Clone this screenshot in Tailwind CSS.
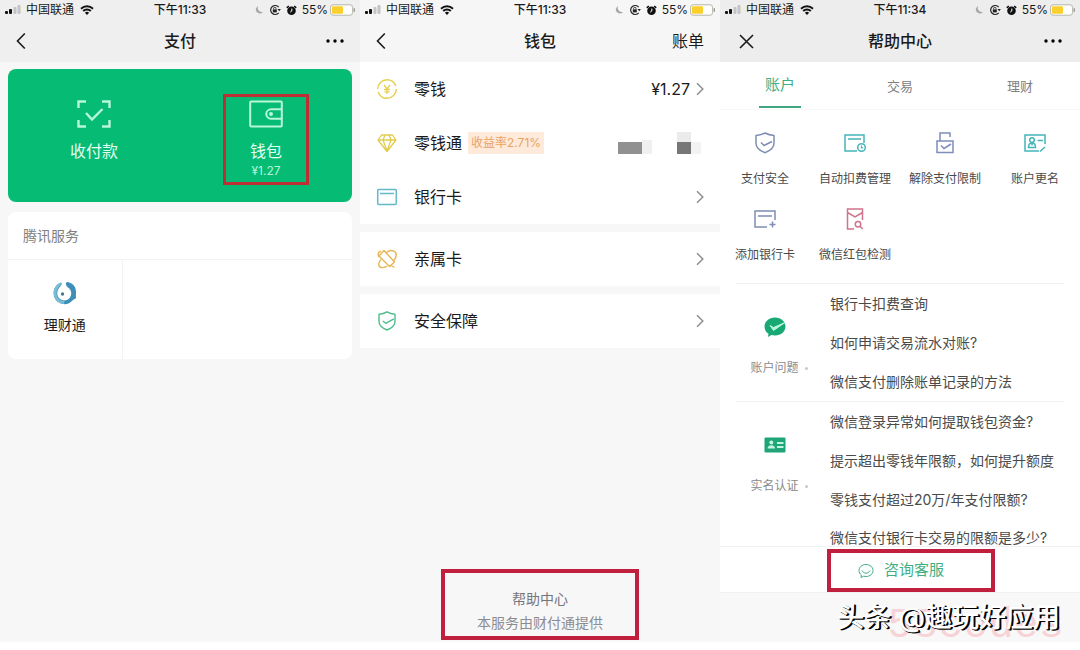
<!DOCTYPE html>
<html lang="zh-CN">
<head>
<meta charset="utf-8">
<meta name="viewport" content="width=device-width, initial-scale=1">
<title>支付 · 钱包 · 帮助中心</title>
<script src="https://cdn.jsdelivr.net/npm/@tailwindcss/browser@4"></script>
</head>
<body class="bg-white font-['Inter','Noto_Sans_CJK_SC',sans-serif] text-[#1a1a1a]">
<svg class="hidden" aria-hidden="true">
  <symbol id="signal" viewBox="0 0 17 10"><rect x="0" y="6" width="3" height="3" rx="1" fill="#111"/><rect x="4" y="4" width="3" height="5" rx="1" fill="#111"/><rect x="8.500" y="2" width="3" height="7" rx="1" fill="#c4c4c4"/><rect x="12.500" y="0" width="3" height="9" rx="1" fill="#c4c4c4"/></symbol>
  <symbol id="wifi" viewBox="0 0 14 10"><path d="M1 3.700a8.600 8.600 0 0 1 12 0M3.200 6a5.400 5.400 0 0 1 7.600 0" fill="none" stroke="#111" stroke-width="1.900"/><path d="M7 10 4.900 7.800a3 3 0 0 1 4.200 0z" fill="#111"/></symbol>
  <symbol id="moon" viewBox="0 0 10 10"><path d="M4 1a4 4 0 1 0 5 6A4.500 4.500 0 0 1 4 1z" fill="#a8a8a8"/></symbol>
  <symbol id="lock" viewBox="0 0 12 12"><path d="M9.700 3.200A4.500 4.500 0 1 0 9.700 8.800" fill="none" stroke="#222" stroke-width="1.200"/><path d="M8.500 5h3.400l-1.700 2.300z" fill="#222"/><rect x="3.800" y="5.400" width="4" height="3" fill="#222"/><path d="M4.600 5.500V4.500a1.200 1.200 0 0 1 2.400 0v1" fill="none" stroke="#222" stroke-width=".9"/></symbol>
  <symbol id="alarm" viewBox="0 0 11 11"><circle cx="5.500" cy="5.700" r="4.300" fill="#111"/><path d="M.8 2.800 2.800 1M10.200 2.800 8.200 1" stroke="#111" stroke-width="1.600"/><path d="M5.800 3.600v2.400L4.200 7.200" fill="none" stroke="#fff" stroke-width="1"/></symbol>
  <symbol id="battery" viewBox="0 0 26 12"><rect x=".6" y=".8" width="22" height="10.400" rx="2.500" fill="#fff" stroke="#b5b5a8"/><rect x="2" y="2.200" width="11" height="7.600" rx="1" fill="#fbd02e"/><path d="M24.300 4.200v3.600" stroke="#999" stroke-width="1.400"/></symbol>
  <symbol id="back" viewBox="0 0 10 18"><path d="M8.800 1.500 1.500 9l7.300 7.500" fill="none" stroke="#1a1a1a" stroke-width="1.600"/></symbol>
  <symbol id="more" viewBox="0 0 18 4"><circle cx="2" cy="2" r="1.700"/><circle cx="9" cy="2" r="1.700"/><circle cx="16" cy="2" r="1.700"/></symbol>
  <symbol id="chevron" viewBox="0 0 8 14"><path d="M1 1.200 6.800 7 1 12.800" fill="none" stroke="#8e8e8e" stroke-width="1.500"/></symbol>
</svg>

<main class="grid min-h-screen grid-cols-3 pb-2">

  <!-- 支付 -->
  <section class="flex flex-col bg-[#f7f7f7]">
    <header class="bg-[#efefef]">
      <div class="grid h-5 grid-cols-[1fr_auto_1fr] items-center text-xs">
        <div class="flex items-center gap-1 pl-[5px]"><svg class="h-[10px] w-[17px]"><use href="#signal"/></svg><span>中国联通</span><svg class="ml-[2px] h-[10px] w-[14px]"><use href="#wifi"/></svg></div>
        <span class="font-medium">下午11:33</span>
        <div class="flex items-center justify-end gap-[5px] pr-[4px]"><svg class="size-[10px]"><use href="#moon"/></svg><svg class="size-3"><use href="#lock"/></svg><svg class="size-[11px]"><use href="#alarm"/></svg><span>55%</span><svg class="-ml-[3px] h-3 w-[26px]"><use href="#battery"/></svg></div>
      </div>
      <div class="grid h-[42px] grid-cols-3 items-center px-4">
        <button aria-label="返回"><svg class="h-[18px] w-[10px]"><use href="#back"/></svg></button>
        <h1 class="text-center text-base font-medium">支付</h1>
        <button class="justify-self-end" aria-label="更多"><svg class="h-1 w-[18px]"><use href="#more"/></svg></button>
      </div>
    </header>
    <div class="mx-2 mt-[7px] grid grid-cols-2 rounded-lg bg-[#06bb74] pt-[25px] pb-[17px] text-[#e2fff1]">
      <button class="mx-auto flex w-[86px] flex-col items-center pt-[6px]">
        <svg class="h-7 w-[34px]" viewBox="0 0 34 28" fill="none" stroke="#b9f7da" stroke-width="2.400"><path d="M1.500 8V1.500H9M25 1.500h7.500V8M1.500 20v6.500H9M25 26.500h7.500V20M9 13l6 6.500L25.500 9"/></svg>
        <span class="mt-[11px] text-base leading-6">收付款</span>
      </button>
      <button class="mx-auto flex h-[91px] w-[86px] flex-col items-center border-[3px] border-[#bd2f34] pt-[3px]">
        <svg class="h-7 w-[34px]" viewBox="0 0 34 28" fill="none" stroke="#b9f7da" stroke-width="2"><rect x="1.200" y="1.500" width="31.600" height="25" rx="1"/><path d="M32.500 9.300H22a4.700 4.700 0 0 0 0 9.400h10.500"/><circle cx="22" cy="14" r="1" fill="#b9f7da"/></svg>
        <span class="mt-[11px] text-base leading-6">钱包</span>
        <span class="text-xs leading-4 text-[#b4f5d7]">¥1.27</span>
      </button>
    </div>
    <div class="mx-2 mt-[10px] rounded-lg bg-white">
      <h2 class="border-b border-[#f3f3f3] px-[15px] text-sm leading-[47px] text-[#808080]">腾讯服务</h2>
      <div class="grid grid-cols-3">
        <button class="flex h-[99px] flex-col items-center border-r border-[#f3f3f3] pt-[21px]">
          <svg class="size-6" viewBox="0 0 24 24"><path d="M14 1c5 .5 8.500 4 9 9 .2 2-.3 3.500 0 6 .2 2-1.500 2-3 3-5 6-13 5-17 0C-1 14 0 5 7 2c2-.8 2 1 1 2.400-4 4-5 9-2 12.600 3 3.500 8.500 3 11-.5 2.500-4 1-8-2-10C13 5 12 2 14 1z" fill="#3d8fb8"/><path d="M7 2C0 5-1 14 3 19c2 2.500 5 4 8 4l.5-3C5 20 1 13 5.500 6.500 6.500 5 8 4 9 2.500 9 1.500 8 1.600 7 2z" fill="#79bcd6"/><circle cx="9.500" cy="13" r="1.700" fill="#47798c"/></svg>
          <span class="mt-2 text-sm leading-6">理财通</span>
        </button>
      </div>
    </div>
  </section>

  <!-- 钱包 -->
  <section class="flex flex-col bg-[#f7f7f8]">
    <header class="bg-[#f6f6f6]">
      <div class="grid h-5 grid-cols-[1fr_auto_1fr] items-center text-xs">
        <div class="flex items-center gap-1 pl-[5px]"><svg class="h-[10px] w-[17px]"><use href="#signal"/></svg><span>中国联通</span><svg class="ml-[2px] h-[10px] w-[14px]"><use href="#wifi"/></svg></div>
        <span class="font-medium">下午11:33</span>
        <div class="flex items-center justify-end gap-[5px] pr-[4px]"><svg class="size-[10px]"><use href="#moon"/></svg><svg class="size-3"><use href="#lock"/></svg><svg class="size-[11px]"><use href="#alarm"/></svg><span>55%</span><svg class="-ml-[3px] h-3 w-[26px]"><use href="#battery"/></svg></div>
      </div>
      <div class="grid h-[42px] grid-cols-3 items-center px-4">
        <button aria-label="返回"><svg class="h-[18px] w-[10px]"><use href="#back"/></svg></button>
        <h1 class="text-center text-base font-medium">钱包</h1>
        <button class="justify-self-end text-base">账单</button>
      </div>
    </header>
    <div class="flex flex-col gap-2">
      <div class="bg-white">
        <button class="flex h-[54px] w-full items-center px-4">
          <svg class="size-[22px]" viewBox="0 0 22 22" fill="none" stroke="#e6cf50" stroke-width="1.400"><circle cx="11" cy="11" r="9.300" stroke-dasharray="26 3"/><path d="m8 7 3 4 3-4M11 11v5M8 11.500h6M8.500 13.800h5" stroke-width="1.300"/></svg>
          <span class="ml-4">零钱</span><span class="ml-auto">¥1.27</span><svg class="ml-[6px] h-[14px] w-2"><use href="#chevron"/></svg>
        </button>
        <button class="flex h-[54px] w-full items-center px-4">
          <svg class="size-[22px]" viewBox="0 0 22 22" fill="none" stroke="#e2cc4c" stroke-width="1.300" stroke-linejoin="round"><path d="M5.500 3h11L20 8l-9 11.500L2 8zM2 8h18M7 8l4 11 4-11M7 8l2-5M15 8l-2-5"/></svg>
          <span class="ml-4">零钱通</span><span class="ml-[6px] bg-[#fdeadb] px-[3px] text-xs leading-[22px] text-[#eba263]">收益率2.71%</span>
          <span class="mr-[3px] ml-auto flex items-end" aria-hidden="true"><span class="h-3 w-6 bg-[#919191]"></span><span class="h-[14px] w-[10px] bg-[#f0f0f0]"></span><span class="ml-[25px] flex flex-col"><span class="h-[10px] w-[14px] bg-[#ebebeb]"></span><span class="h-3 w-[14px] bg-[#777]"></span></span><span class="h-3 w-[10px] bg-[#f3f3f3]"></span></span>
        </button>
        <button class="flex h-[54px] w-full items-center px-4">
          <svg class="size-[22px]" viewBox="0 0 22 22" fill="none" stroke="#63b9c8" stroke-width="1.500"><rect x="1.700" y="3.500" width="18.600" height="15" rx="1"/><path d="M4 7.500h14"/></svg>
          <span class="ml-4">银行卡</span><svg class="ml-auto h-[14px] w-2"><use href="#chevron"/></svg>
        </button>
      </div>
      <button class="flex h-[54px] w-full items-center bg-white px-4">
        <svg class="size-[22px]" viewBox="0 0 22 22" fill="none" stroke="#e6b554" stroke-width="1.400" stroke-linejoin="round"><path d="M8 2.500 18.500 14l-5 4.500L3 8z"/><path d="M10.500 4.500c4-3.500 11-2 9.500 4-.5 2-1.500 3-2.500 4.300M3.300 9C1 6 2.500 3.500 5 3.200M11 18c-2 2-7 2.500-8-.5-.8-2 0-4 2-6M15 17.500l3.500 2"/></svg>
        <span class="ml-4">亲属卡</span><svg class="ml-auto h-[14px] w-2"><use href="#chevron"/></svg>
      </button>
      <button class="flex h-[54px] w-full items-center bg-white px-4">
        <svg class="size-[22px]" viewBox="0 0 22 22" fill="none" stroke="#4fbd8c" stroke-width="1.400" stroke-linejoin="round"><path d="M11 1.800c2.500 1.500 5 2.200 8 2.400v7c0 4-3.500 7-8 8.800-4.500-1.800-8-4.800-8-8.800v-7c3-.2 5.500-.9 8-2.400z"/><path d="m6.800 11 3 2.300 8-4.500"/></svg>
        <span class="ml-4">安全保障</span><svg class="ml-auto h-[14px] w-2"><use href="#chevron"/></svg>
      </button>
    </div>
    <footer class="mx-auto mt-auto mb-[2px] w-[198px] border-4 border-[#c01f3e] pt-[14px] pb-[1px] text-center text-sm leading-6 text-[#8c8c90]">
      <a href="#help" class="block text-[#76767e]">帮助中心</a>
      <p>本服务由财付通提供</p>
    </footer>
  </section>

  <!-- 帮助中心 -->
  <section class="relative flex flex-col bg-[#f8f8f8]">
    <header class="bg-[#ededed]">
      <div class="grid h-5 grid-cols-[1fr_auto_1fr] items-center text-xs">
        <div class="flex items-center gap-1 pl-[5px]"><svg class="h-[10px] w-[17px]"><use href="#signal"/></svg><span>中国联通</span><svg class="ml-[2px] h-[10px] w-[14px]"><use href="#wifi"/></svg></div>
        <span class="font-medium">下午11:34</span>
        <div class="flex items-center justify-end gap-[5px] pr-[4px]"><svg class="size-[10px]"><use href="#moon"/></svg><svg class="size-3"><use href="#lock"/></svg><svg class="size-[11px]"><use href="#alarm"/></svg><span>55%</span><svg class="-ml-[3px] h-3 w-[26px]"><use href="#battery"/></svg></div>
      </div>
      <div class="grid h-[42px] grid-cols-3 items-center px-[18px]">
        <button aria-label="关闭"><svg class="size-[17px]" viewBox="-1 -1 17 17" stroke="#1a1a1a" stroke-width="1.600"><path d="m1 1 13 13M14 1 1 14"/></svg></button>
        <h1 class="text-center text-base font-medium">帮助中心</h1>
        <button class="justify-self-end" aria-label="更多"><svg class="h-1 w-[18px]"><use href="#more"/></svg></button>
      </div>
    </header>
    <div class="bg-white">
      <nav class="grid h-[48px] grid-cols-3 border-b border-[#f6f6f6] text-[13px] leading-[46px] text-[#808080]">
        <button class="mx-auto h-[46px] w-[42px] border-b-2 border-[#3fa67f] text-[15px] leading-[46px] whitespace-nowrap text-[#3fae82]">账户</button>
        <button>交易</button>
        <button>理财</button>
      </nav>
      <div class="grid grid-cols-4 pt-[21px] pb-[22px] text-xs leading-4 text-[#4a4a4a]">
        <button class="flex h-[76px] flex-col items-center">
          <svg class="size-6" viewBox="0 0 24 24" fill="none" stroke="#7e8db3" stroke-width="1.500" stroke-linejoin="round"><path d="M12 2c3 1.600 5.500 2.200 9 2.400V12c0 4.500-3.800 7.800-9 9.700C6.800 19.800 3 16.500 3 12V4.400C6.500 4.200 9 3.600 12 2z"/><path d="m8 11.500 3 3 8-4"/></svg>
          <span class="mt-4 whitespace-nowrap">支付安全</span>
        </button>
        <button class="flex h-[76px] flex-col items-center">
          <svg class="size-6" viewBox="0 0 24 24" fill="none" stroke="#45b5ba" stroke-width="1.500"><path d="M14 20H2V4h19v8M5 8h13"/><circle cx="18.500" cy="16.500" r="3.800"/><path d="M18.500 14.500v2.300h1.500" stroke-width="1.200"/></svg>
          <span class="mt-4 whitespace-nowrap">自动扣费管理</span>
        </button>
        <button class="flex h-[76px] flex-col items-center">
          <svg class="size-6" viewBox="0 0 24 24" fill="none" stroke="#7e8dbb" stroke-width="1.500"><path d="M4 10h16v11.500H4zM7 10V2h10v4M8 14.500l3 3 7-4.500"/></svg>
          <span class="mt-4 whitespace-nowrap">解除支付限制</span>
        </button>
        <button class="flex h-[76px] flex-col items-center">
          <svg class="size-6" viewBox="0 0 24 24" fill="none" stroke="#45b5ba" stroke-width="1.500"><path d="M16 20H2V4h20v9M14.500 9.500H20M17 20.500l5-4.500"/><circle cx="9" cy="9" r="2.300"/><path d="M5.500 16.500c0-6 7-6 7 0zM9 12.500v2"/></svg>
          <span class="mt-4 whitespace-nowrap">账户更名</span>
        </button>
        <button class="flex h-[54px] flex-col items-center">
          <svg class="size-6 shrink-0" viewBox="0 0 24 24" fill="none" stroke="#7e8db3" stroke-width="1.500"><path d="M14 20H2V4h20v9M5 9h14M19.500 14.500v6M16.500 17.500h6"/></svg>
          <span class="mt-4 whitespace-nowrap">添加银行卡</span>
        </button>
        <button class="flex h-[54px] flex-col items-center">
          <svg class="size-6 shrink-0" viewBox="0 0 24 24" fill="none" stroke="#d0738c" stroke-width="1.500"><path d="M11 22H4.500V2h15v11M4.500 5.500 12 10l7.500-4.500"/><circle cx="15" cy="17.300" r="2.700"/><path d="m17 19.300 2.800 2.700"/></svg>
          <span class="mt-4 whitespace-nowrap">微信红包检测</span>
        </button>
      </div>
      <div class="mr-4 ml-4 text-sm text-[#4a4a4a]">
        <section class="grid grid-cols-[94px_1fr] border-t border-[#f1f1f1]">
          <a href="#account" class="flex flex-col items-center pt-[31px] pr-4 text-xs text-[#8a8a8a]">
            <svg class="size-6" viewBox="0 0 24 24"><path d="M12 2.500c6 0 10.500 4 10.500 9s-4.500 9-10.500 9c-1.300 0-2.500-.2-3.600-.5L5 22l.5-3.200C3 17.200 1.500 14.500 1.500 11.500c0-5 4.500-9 10.500-9z" fill="#18a873"/><path d="m7 10.500 3.500 2L22 7.500l-11.500 8z" fill="#b9f7dc" stroke="#b9f7dc" stroke-linejoin="round"/></svg>
            <span class="mt-[21px] ml-2 flex items-center gap-[6px] leading-4 whitespace-nowrap">账户问题<i class="size-[3px] rounded-full bg-[#c8c8c8]"></i></span>
          </a>
          <ul class="leading-[39px] whitespace-nowrap">
            <li><a href="#q1">银行卡扣费查询</a></li>
            <li><a href="#q2">如何申请交易流水对账?</a></li>
            <li><a href="#q3">微信支付删除账单记录的方法</a></li>
          </ul>
        </section>
        <section class="grid grid-cols-[94px_1fr] border-t border-[#f1f1f1]">
          <a href="#identity" class="flex flex-col items-center pt-[31px] pr-4 text-xs text-[#8a8a8a]">
            <svg class="size-6" viewBox="0 0 24 24"><rect x="1.500" y="4.500" width="21" height="15" rx="1" fill="#1fa577"/><g fill="#c2f5e0"><circle cx="8.300" cy="9.500" r="2"/><path d="M4.500 15.500c0-4.500 7.600-4.500 7.600 0zM14 9h6.500v2H14zM14 13h6.500v2H14z"/></g></svg>
            <span class="mt-[21px] ml-2 flex items-center gap-[6px] leading-4 whitespace-nowrap">实名认证<i class="size-[3px] rounded-full bg-[#c8c8c8]"></i></span>
          </a>
          <ul class="leading-[39px] whitespace-nowrap">
            <li><a href="#q4">微信登录异常如何提取钱包资金?</a></li>
            <li><a href="#q5">提示超出零钱年限额，如何提升额度</a></li>
            <li><a href="#q6">零钱支付超过20万/年支付限额?</a></li>
            <li class="pt-[10px] leading-[17px]"><a href="#q7">微信支付银行卡交易的限额是多少?</a></li>
          </ul>
        </section>
      </div>
    </div>
    <div class="border-y border-[#f1f1f1] bg-white pt-[2px] pl-[107px]">
      <button class="flex h-[43px] w-[168px] items-center border-4 border-[#c01f3e] pl-[27px] text-[15px] text-[#3fae82]">
        <svg class="mr-[10px] size-4" viewBox="0 0 16 16" fill="none" stroke="#3fae82"><path d="M8 1.500c4 0 7 2.600 7 6s-3 6-7 6c-.8 0-1.600-.1-2.300-.3L3 14.500l.3-2.600C1.900 10.800 1 9.300 1 7.500c0-3.400 3-6 7-6z"/><path d="M4 7.500c1.500 3.500 6.500 3.500 8 0"/></svg>咨询客服
      </button>
    </div>
    <!-- Watermarks lie over the page -->
    <div class="pointer-events-none absolute right-4 -bottom-2 font-['Liberation_Mono',monospace] text-[42px] leading-[48px] text-[#f7b9bf]/60">58codes</div>
    <div class="pointer-events-none absolute right-5 bottom-[6px] text-[27px] leading-9 font-medium whitespace-nowrap text-white [text-shadow:2px_1px_0_#000,1px_1px_0_#000]">头条 @趣玩好应用</div>
  </section>
</main>
</body>
</html>
